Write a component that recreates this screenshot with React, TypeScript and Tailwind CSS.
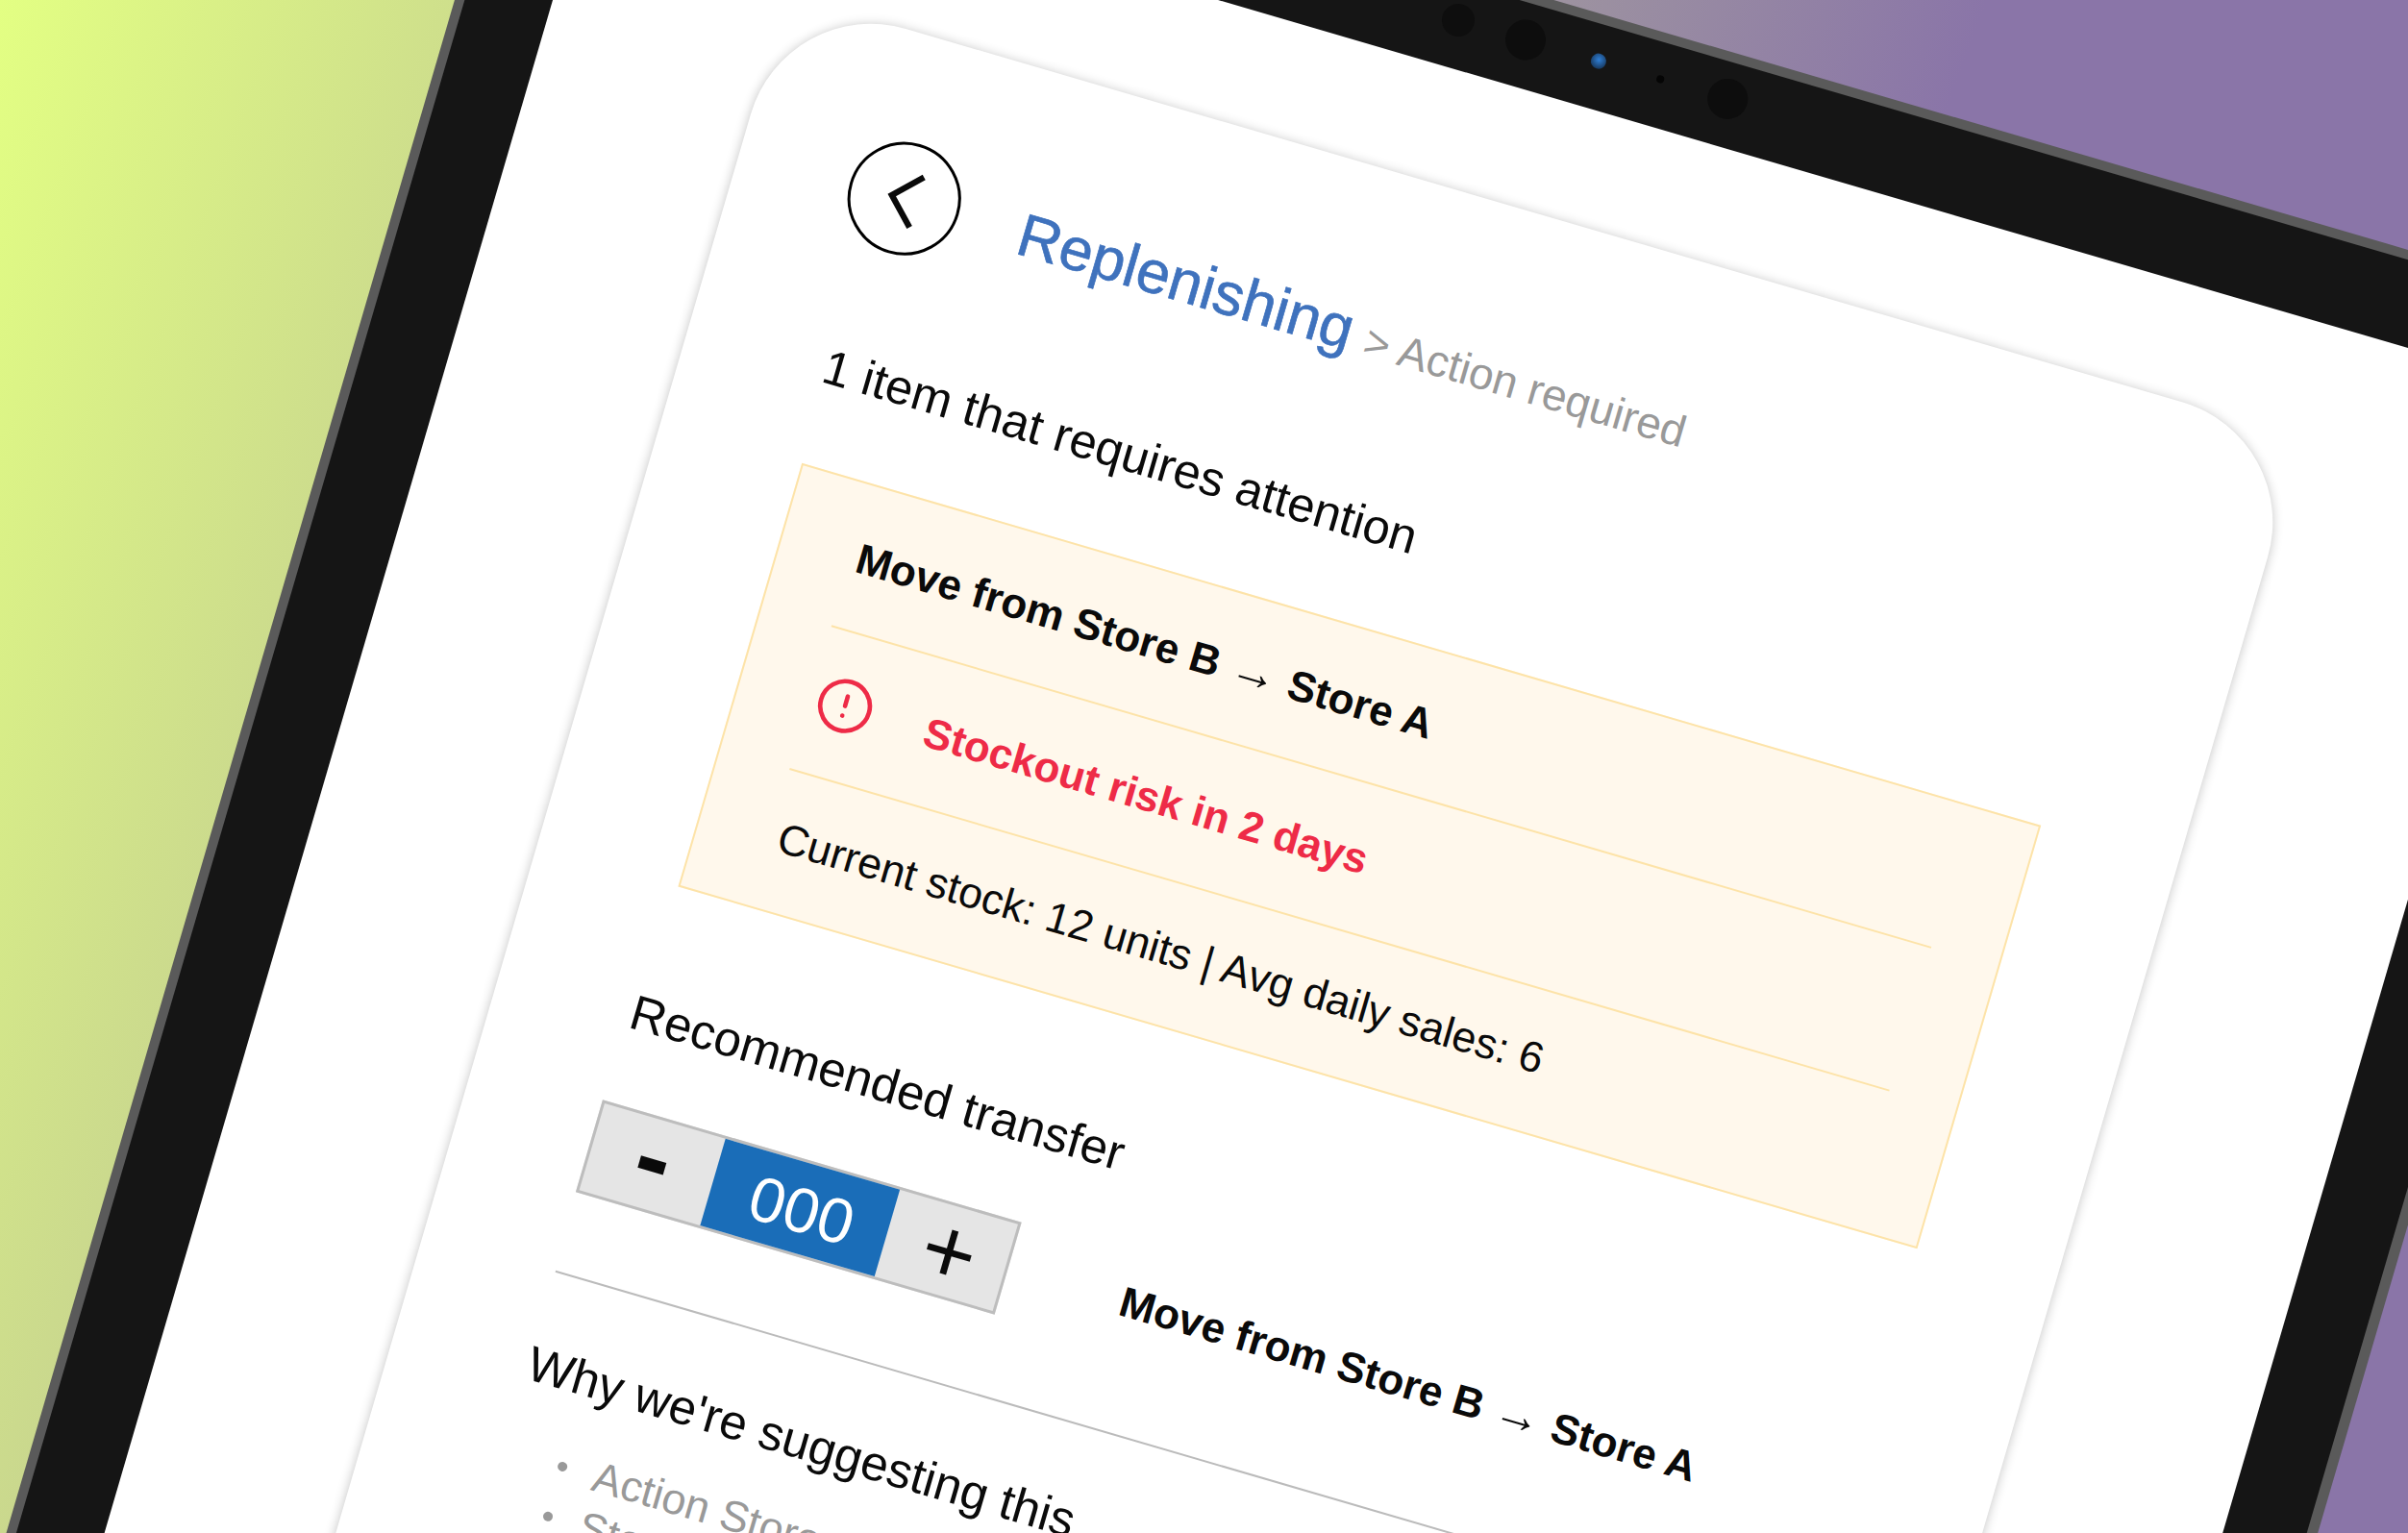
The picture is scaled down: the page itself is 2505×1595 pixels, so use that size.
import React from 'react';
import { ChevronLeft, CircleAlert } from 'lucide-react';

const Route: React.FC = () => (
  <>
    Move from Store B <span className="text-[50px] leading-none">→</span> Store A
  </>
);

const App: React.FC = () => {
  return (
    <div className="relative w-[2505px] h-[1595px] overflow-hidden bg-[linear-gradient(110deg,#e3ff83_0%,#8a75a8_67%)] font-['Liberation_Sans',sans-serif] text-[#0a0a0a]">
      {/* tablet, tilted as a whole */}
      <div className="absolute left-[563px] top-[-308px] w-[2308px] h-[2300px] origin-top-left rotate-[16.3deg] bg-[#5a5a5a] pt-[10px] pl-[10px] pr-[11px]">
        <div className="h-full bg-[#151515] pl-[88px] pr-[84px]">
          <div className="h-[88px] pb-3 flex items-center justify-center">
            <div className="w-[34px] h-[34px] rounded-full bg-[#0e0e0e]" />
            <div className="ml-[35px] w-[42px] h-[42px] rounded-full bg-[#0d0d0d]" />
            <div className="ml-[50px] w-[16px] h-[16px] rounded-full bg-[radial-gradient(circle_at_50%_40%,#2f7fd6,#10233a)]" />
            <div className="ml-[55px] w-[8px] h-[8px] rounded-full bg-[#050505]" />
            <div className="ml-[48px] w-[42px] h-[42px] rounded-full bg-[#0d0d0d]" />
          </div>

          <div className="h-full bg-white pl-[231px] pr-[240px] pt-[120px]">
            <div className="h-full rounded-[130px] bg-white shadow-[0_1px_12px_rgba(0,0,0,0.24)] pl-[143px] pr-[150px] pt-[111px]">
              <div className="flex items-center -ml-[24px]">
                <button className="w-[118px] h-[118px] shrink-0 rounded-full border-[3px] border-black flex items-center justify-center">
                  <ChevronLeft size={108} strokeWidth={1.4} strokeLinecap="butt" strokeLinejoin="miter" />
                </button>
                <span className="ml-[66px] text-[62.5px] leading-[74px] text-[#3f72bd] [-webkit-text-stroke:0.7px_#3f72bd]">Replenishing</span>
                <span className="ml-[15px] mt-[12px] text-[46px] leading-[54px] text-[#999999]">&gt; Action required</span>
              </div>

              <h2 className="mt-[101px] ml-[4px] text-[50.6px] leading-[60px]">1 item that requires attention</h2>

              <div className="mt-[74px] ml-[10px] w-[1343px] h-[459px] border-2 border-[#fde3a8] bg-[#fff8ec] pl-[75px] pr-[72px] flex flex-col">
                <div className="h-[153px] shrink-0 flex items-center border-b-2 border-[#fde3a8]">
                  <span className="ml-[6px] text-[44.2px] leading-[54px] font-bold"><Route /></span>
                </div>
                <div className="h-[155px] shrink-0 flex items-center border-b-2 border-[#fde3a8]">
                  <CircleAlert size={62} strokeWidth={1.8} className="ml-[6px] -mt-[4px] text-[#ee2b47]" />
                  <span className="ml-[56px] text-[44px] leading-[54px] font-bold text-[#ee2b47]">Stockout risk in 2 days</span>
                </div>
                <div className="flex-1 flex items-center">
                  <span className="ml-[9px] -mt-[8px] text-[44.7px] leading-[54px]">Current stock: 12 units | Avg daily sales: 6</span>
                </div>
              </div>

              <h2 className="mt-[108px] text-[51px] leading-[60px]">Recommended transfer</h2>

              <div className="mt-[67px] -ml-[3px] flex items-center">
                <div className="w-[454px] h-[100px] shrink-0 flex border-[3px] border-[#bdbdbd] bg-[#e5e5e5]">
                  <div className="w-[131px] flex items-center justify-center text-[108px] leading-none font-bold pb-[16px]">-</div>
                  <div className="w-[189px] bg-[#1a6db8] flex items-center justify-center text-[66px] leading-none text-white pl-[5px] pt-[3px]">000</div>
                  <div className="flex-1 flex items-center justify-center text-[96px] leading-none pl-[7px]">+</div>
                </div>
                <span className="ml-[122px] -mt-[2px] text-[44.2px] leading-[54px] font-bold"><Route /></span>
              </div>

              <div className="mt-[84px] h-[2px] bg-[#bbbbbb]" />

              <h2 className="mt-[68px] text-[51px] leading-[60px]">Why we're suggesting this</h2>

              <ul className="mt-[37px] pl-[59px] text-[45px] leading-[54px] text-[#999999]">
                <li className="flex items-start">
                  <span className="mt-[22px] mr-[29px] w-[10px] h-[10px] rounded-full bg-[#999999]" />
                  Action Store A
                </li>
                <li className="flex items-start">
                  <span className="mt-[22px] mr-[29px] w-[10px] h-[10px] rounded-full bg-[#999999]" />
                  Store B
                </li>
              </ul>
            </div>
          </div>
        </div>
      </div>
    </div>
  );
};

export default App;
